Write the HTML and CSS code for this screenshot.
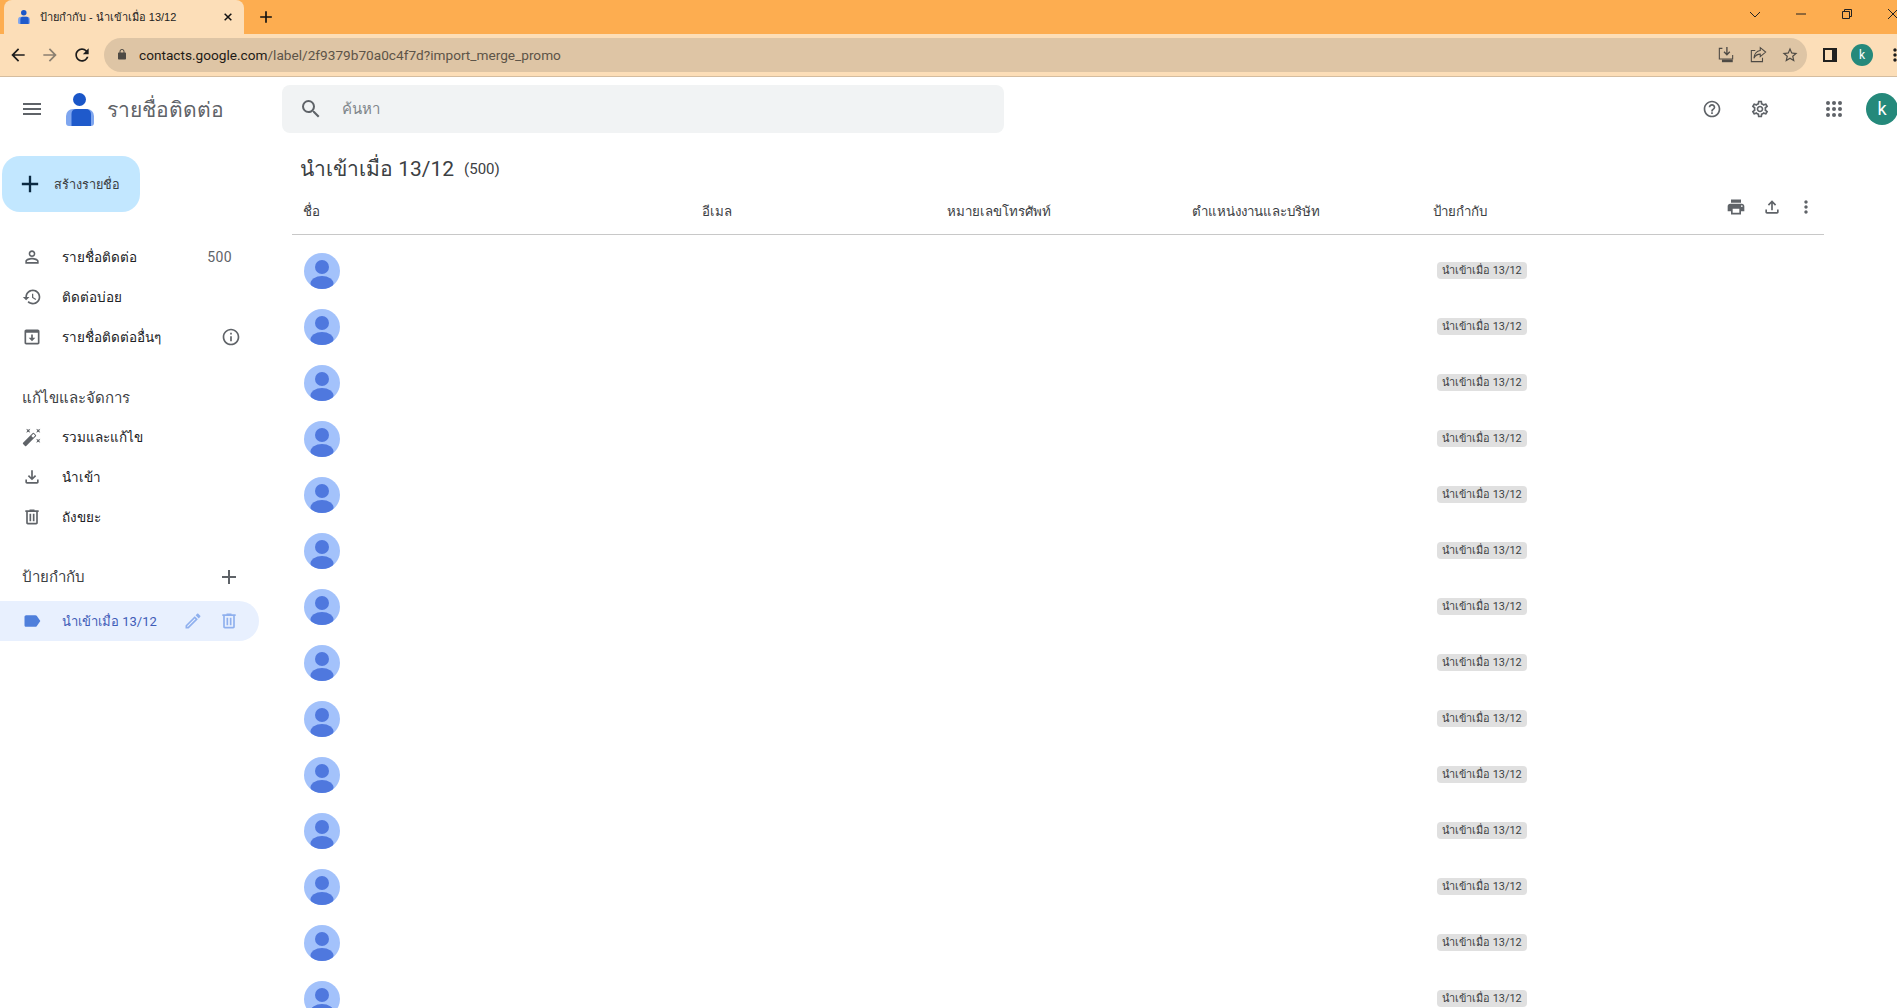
FILE: index.html
```html
<!DOCTYPE html>
<html lang="th">
<head>
<meta charset="utf-8">
<title>ป้ายกำกับ - นำเข้าเมื่อ 13/12</title>
<link rel="stylesheet" href="styles.css">
</head>
<body>
<svg class="sprite" xmlns="http://www.w3.org/2000/svg">
<symbol id="i-menu" viewBox="0 0 24 24"><path d="M3 18h18v-2H3v2zm0-5h18v-2H3v2zm0-7v2h18V6H3z"/></symbol>
<symbol id="i-search" viewBox="0 0 24 24"><path d="M15.5 14h-.79l-.28-.27A6.471 6.471 0 0 0 16 9.5 6.5 6.5 0 1 0 9.5 16c1.61 0 3.09-.59 4.23-1.57l.27.28v.79l5 4.99L20.49 19l-4.99-5zm-6 0C7.01 14 5 11.99 5 9.5S7.01 5 9.5 5 14 7.01 14 9.5 11.99 14 9.5 14z"/></symbol>
<symbol id="i-help" viewBox="0 0 24 24"><path d="M11 18h2v-2h-2v2zm1-16C6.48 2 2 6.48 2 12s4.48 10 10 10 10-4.48 10-10S17.52 2 12 2zm0 18c-4.41 0-8-3.59-8-8s3.59-8 8-8 8 3.59 8 8-3.59 8-8 8zm0-14c-2.21 0-4 1.79-4 4h2c0-1.1.9-2 2-2s2 .9 2 2c0 2-3 1.75-3 5h2c0-2.25 3-2.5 3-5 0-2.21-1.79-4-4-4z"/></symbol>
<symbol id="i-gear" viewBox="0 0 24 24"><path d="M19.43 12.98c.04-.32.07-.64.07-.98 0-.34-.03-.66-.07-.98l2.11-1.65c.19-.15.24-.42.12-.64l-2-3.46c-.09-.16-.26-.25-.44-.25-.06 0-.12.01-.17.03l-2.49 1c-.52-.4-1.08-.73-1.69-.98l-.38-2.65C14.46 2.18 14.25 2 14 2h-4c-.25 0-.46.18-.49.42l-.38 2.65c-.61.25-1.17.59-1.69.98l-2.49-1c-.06-.02-.12-.03-.18-.03-.17 0-.34.09-.43.25l-2 3.46c-.13.22-.07.49.12.64l2.11 1.65c-.04.32-.07.65-.07.98 0 .33.03.66.07.98l-2.11 1.65c-.19.15-.24.42-.12.64l2 3.46c.09.16.26.25.44.25.06 0 .12-.01.17-.03l2.49-1c.52.4 1.08.73 1.69.98l.38 2.65c.03.24.24.42.49.42h4c.25 0 .46-.18.49-.42l.38-2.65c.61-.25 1.17-.59 1.69-.98l2.49 1c.06.02.12.03.18.03.17 0 .34-.09.43-.25l2-3.46c.12-.22.07-.49-.12-.64l-2.11-1.65zm-1.98-1.71c.04.31.05.52.05.73 0 .21-.02.43-.05.73l-.14 1.13.89.7 1.08.84-.7 1.21-1.27-.51-1.04-.42-.9.68c-.43.32-.84.56-1.25.73l-1.06.43-.16 1.13-.2 1.35h-1.4l-.19-1.35-.16-1.13-1.06-.43c-.43-.18-.83-.41-1.23-.71l-.91-.7-1.06.43-1.27.51-.7-1.21 1.08-.84.89-.7-.14-1.13c-.03-.31-.05-.54-.05-.74s.02-.43.05-.73l.14-1.13-.89-.7-1.08-.84.7-1.21 1.27.51 1.04.42.9-.68c.43-.32.84-.56 1.25-.73l1.06-.43.16-1.13.2-1.35h1.39l.19 1.35.16 1.13 1.06.43c.43.18.83.41 1.23.71l.91.7 1.06-.43 1.27-.51.7 1.21-1.07.85-.89.7.14 1.13zM12 8c-2.21 0-4 1.79-4 4s1.79 4 4 4 4-1.79 4-4-1.79-4-4-4zm0 6c-1.1 0-2-.9-2-2s.9-2 2-2 2 .9 2 2-.9 2-2 2z"/></symbol>
<symbol id="i-apps" viewBox="0 0 24 24"><circle cx="6" cy="6" r="2"/><circle cx="12" cy="6" r="2"/><circle cx="18" cy="6" r="2"/><circle cx="6" cy="12" r="2"/><circle cx="12" cy="12" r="2"/><circle cx="18" cy="12" r="2"/><circle cx="6" cy="18" r="2"/><circle cx="12" cy="18" r="2"/><circle cx="18" cy="18" r="2"/></symbol>
<symbol id="i-person" viewBox="0 0 24 24"><path d="M12 5.9c1.16 0 2.1.94 2.1 2.1s-.94 2.1-2.1 2.1S9.9 9.16 9.9 8s.94-2.1 2.1-2.1m0 9c2.97 0 6.1 1.46 6.1 2.1v1.1H5.9V17c0-.64 3.13-2.1 6.1-2.1M12 4C9.79 4 8 5.79 8 8s1.79 4 4 4 4-1.79 4-4-1.79-4-4-4zm0 9c-2.67 0-8 1.34-8 4v3h16v-3c0-2.66-5.33-4-8-4z"/></symbol>
<symbol id="i-history" viewBox="0 0 24 24"><path d="M13 3c-4.97 0-9 4.03-9 9H1l3.89 3.89.07.14L9 12H6c0-3.87 3.13-7 7-7s7 3.13 7 7-3.13 7-7 7c-1.93 0-3.68-.79-4.94-2.06l-1.42 1.42C8.27 19.99 10.51 21 13 21c4.97 0 9-4.03 9-9s-4.03-9-9-9zm-1 5v5l4.28 2.54.72-1.21-3.5-2.08V8H12z"/></symbol>
<symbol id="i-other" viewBox="0 0 24 24"><path d="M19 3H5c-1.1 0-2 .9-2 2v14c0 1.1.9 2 2 2h14c1.1 0 2-.9 2-2V5c0-1.1-.9-2-2-2zm0 16H5V7h14v12zm-7-2l4-4h-3V9h-2v4H8l4 4z"/></symbol>
<symbol id="i-info" viewBox="0 0 24 24"><path d="M11 7h2v2h-2zm0 4h2v6h-2zm1-9C6.48 2 2 6.48 2 12s4.48 10 10 10 10-4.48 10-10S17.52 2 12 2zm0 18c-4.41 0-8-3.59-8-8s3.59-8 8-8 8 3.59 8 8-3.59 8-8 8z"/></symbol>
<symbol id="i-fix" viewBox="0 0 24 24"><path d="M7.5 5.6L10 7 8.6 4.5 10 2 7.5 3.4 5 2l1.4 2.5L5 7zm12 9.8L17 14l1.4 2.5L17 19l2.5-1.4L22 19l-1.4-2.5L22 14zM22 2l-2.5 1.4L17 2l1.4 2.5L17 7l2.5-1.4L22 7l-1.4-2.5zm-7.63 5.29a.996.996 0 0 0-1.41 0L1.29 18.96a.996.996 0 0 0 0 1.41l2.34 2.34c.39.39 1.02.39 1.41 0L16.7 11.05a.996.996 0 0 0 0-1.41l-2.33-2.35zm-1.03 5.49l-2.12-2.12 2.44-2.44 2.12 2.12-2.44 2.44z"/></symbol>
<symbol id="i-down" viewBox="0 0 24 24"><path d="M18 15v3H6v-3H4v3c0 1.1.9 2 2 2h12c1.1 0 2-.9 2-2v-3h-2zm-1-4l-1.41-1.41L13 12.17V4h-2v8.17L8.41 9.59 7 11l5 5 5-5z"/></symbol>
<symbol id="i-up" viewBox="0 0 24 24"><path d="M18 15v3H6v-3H4v3c0 1.1.9 2 2 2h12c1.1 0 2-.9 2-2v-3h-2zM7 9l1.41 1.41L11 7.83V16h2V7.83l2.59 2.58L17 9l-5-5-5 5z"/></symbol>
<symbol id="i-trash" viewBox="0 0 24 24"><path d="M15 4V3H9v1H4v2h1v13c0 1.1.9 2 2 2h10c1.1 0 2-.9 2-2V6h1V4h-5zm2 15H7V6h10v13zM9 8h2v9H9zm4 0h2v9h-2z"/></symbol>
<symbol id="i-pencil" viewBox="0 0 24 24"><path d="M14.06 9.02l.92.92L5.92 19H5v-.92l9.06-9.06M17.66 3c-.25 0-.51.1-.7.29l-1.83 1.83 3.75 3.75 1.83-1.83c.39-.39.39-1.02 0-1.41l-2.34-2.34c-.2-.2-.45-.29-.71-.29zm-3.6 3.19L3 17.25V21h3.75L17.81 9.94l-3.75-3.75z"/></symbol>
<symbol id="i-label" viewBox="0 0 24 24"><path d="M17.63 5.84C17.27 5.33 16.67 5 16 5L5 5.01C3.9 5.01 3 5.9 3 7v10c0 1.1.9 1.99 2 1.99L16 19c.67 0 1.27-.33 1.63-.84L22 12l-4.37-6.16z"/></symbol>
<symbol id="i-print" viewBox="0 0 24 24"><path d="M19 8H5c-1.66 0-3 1.34-3 3v6h4v4h12v-4h4v-6c0-1.66-1.34-3-3-3zm-3 11H8v-5h8v5zm3-7c-.55 0-1-.45-1-1s.45-1 1-1 1 .45 1 1-.45 1-1 1zm-1-9H6v4h12V3z"/></symbol>
<symbol id="i-more" viewBox="0 0 24 24"><path d="M12 8c1.1 0 2-.9 2-2s-.9-2-2-2-2 .9-2 2 .9 2 2 2zm0 2c-1.1 0-2 .9-2 2s.9 2 2 2 2-.9 2-2-.9-2-2-2zm0 6c-1.1 0-2 .9-2 2s.9 2 2 2 2-.9 2-2-.9-2-2-2z"/></symbol>
<symbol id="i-add" viewBox="0 0 24 24"><path d="M19 13h-6v6h-2v-6H5v-2h6V5h2v6h6v2z"/></symbol>
<symbol id="i-back" viewBox="0 0 24 24"><path d="M20 11H7.83l5.59-5.59L12 4l-8 8 8 8 1.41-1.41L7.83 13H20v-2z"/></symbol>
<symbol id="i-forward" viewBox="0 0 24 24"><path d="M12 4l-1.41 1.41L16.17 11H4v2h12.17l-5.58 5.59L12 20l8-8z"/></symbol>
<symbol id="i-reload" viewBox="0 0 24 24"><path d="M17.65 6.35C16.2 4.9 14.21 4 12 4c-4.42 0-7.99 3.58-7.99 8s3.57 8 7.99 8c3.73 0 6.84-2.55 7.73-6h-2.08c-.82 2.33-3.04 4-5.65 4-3.31 0-6-2.69-6-6s2.69-6 6-6c1.66 0 3.14.69 4.22 1.78L13 11h7V4l-2.35 2.35z"/></symbol>
<symbol id="i-lock" viewBox="0 0 24 24"><path d="M18 8h-1V6c0-2.76-2.24-5-5-5S7 3.24 7 6v2H6c-1.1 0-2 .9-2 2v10c0 1.1.9 2 2 2h12c1.1 0 2-.9 2-2V10c0-1.1-.9-2-2-2zM9 6c0-1.66 1.34-3 3-3s3 1.34 3 3v2H9V6z"/></symbol>
<symbol id="i-star" viewBox="0 0 24 24"><path d="M22 9.24l-7.19-.62L12 2 9.19 8.63 2 9.24l5.46 4.73L5.82 21 12 17.27 18.18 21l-1.63-7.03L22 9.24zM12 15.4l-3.76 2.27 1-4.28-3.32-2.88 4.38-.38L12 6.1l1.71 4.04 4.38.38-3.32 2.88 1 4.28L12 15.4z"/></symbol>
<symbol id="i-install" viewBox="0 0 20 20"><path fill="none" stroke="currentColor" stroke-width="1.2" d="M6 2.6H2.600v11.800h14.800V10"/><path d="M11 1v8M7.800 6.500L11 9.700l3.200-3.200" fill="none" stroke="currentColor" stroke-width="1.5"/><rect x="5.500" y="15" width="12" height="3"/></symbol>
<symbol id="i-share" viewBox="0 0 20 20"><path fill="none" stroke="currentColor" stroke-width="1.2" d="M7 5H2.600v12.400h12.400V13"/><path fill="none" stroke="currentColor" stroke-width="1.2" d="M12.500 1.800L18.500 6.800l-6 5V9C9.500 9 7 10.500 5.500 13.500 5.500 9 8.500 5.500 12.500 5z"/></symbol>
<symbol id="i-close" viewBox="0 0 12 12"><path d="M2 2l8 8M10 2l-8 8" fill="none" stroke="currentColor" stroke-width="1.8"/></symbol>
<symbol id="i-logo" viewBox="0 0 28 33"><circle cx="13.500" cy="6.500" r="6.500" fill="#1a56c8"/><path d="M7 16h14a7 7 0 0 1 7 7v7a3 3 0 0 1-3 3H3a3 3 0 0 1-3-3v-7a7 7 0 0 1 7-7z" fill="#7fa6ef"/><path d="M10 16h10a5 5 0 0 1 5 5v12H5.500V21a5 5 0 0 1 4.500-5z" fill="#1f5acb"/></symbol>
<symbol id="i-avatar" viewBox="0 0 36 36"><defs><clipPath id="av-clip"><circle cx="18" cy="18" r="18"/></clipPath></defs><circle cx="18" cy="18" r="18" fill="#a3c2fb"/><g clip-path="url(#av-clip)" fill="#4f78de"><circle cx="18" cy="14" r="7"/><ellipse cx="18" cy="30.500" rx="11.500" ry="7.500"/></g></symbol>
</svg>

<header class="tabstrip">
  <div class="tab">
    <svg class="fav"><use href="#i-logo"/></svg>
    <span class="tab-title">ป้ายกำกับ - นำเข้าเมื่อ 13/12</span>
    <svg class="tab-close"><use href="#i-close"/></svg>
  </div>
  <svg class="newtab"><use href="#i-add"/></svg>
  <div class="winctl">
    <svg class="win" viewBox="0 0 12 12"><path d="M1 4l5 5 5-5" fill="none" stroke="currentColor"/></svg>
    <svg class="win" viewBox="0 0 12 12"><path d="M1 6h10" fill="none" stroke="currentColor" stroke-width="1"/></svg>
    <svg class="win" viewBox="0 0 12 12"><path d="M1.500 3.500h7v7h-7zM3.500 3.500v-2h7v7h-2" fill="none" stroke="currentColor"/></svg>
    <svg class="win" viewBox="0 0 12 12"><path d="M1 1l10 10M11 1L1 11" fill="none" stroke="currentColor"/></svg>
  </div>
</header>

<nav class="toolbar">
  <svg class="tb-icon dark"><use href="#i-back"/></svg>
  <svg class="tb-icon faded"><use href="#i-forward"/></svg>
  <svg class="tb-icon dark"><use href="#i-reload"/></svg>
  <div class="omnibox">
    <svg class="lock"><use href="#i-lock"/></svg>
    <span class="url"><span class="url-host">contacts.google.com</span>/label/2f9379b70a0c4f7d?import_merge_promo</span>
    <svg class="omni-icon"><use href="#i-install"/></svg>
    <svg class="omni-icon"><use href="#i-share"/></svg>
    <svg class="omni-icon"><use href="#i-star"/></svg>
  </div>
  <div class="sidepanel"><span class="sidepanel-fill"></span></div>
  <span class="profile-small">k</span>
  <svg class="tb-icon chrome-menu"><use href="#i-more"/></svg>
</nav>

<div class="apphead">
  <svg class="hamburger"><use href="#i-menu"/></svg>
  <svg class="logo"><use href="#i-logo"/></svg>
  <span class="brand">รายชื่อติดต่อ</span>
  <div class="searchbar">
    <svg class="search-icon"><use href="#i-search"/></svg>
    <span class="search-text">ค้นหา</span>
  </div>
  <div class="head-right">
    <svg class="head-icon"><use href="#i-help"/></svg>
    <svg class="head-icon gear"><use href="#i-gear"/></svg>
    <svg class="apps"><use href="#i-apps"/></svg>
    <span class="profile">k</span>
  </div>
</div>

<div class="layout">
  <aside class="sidebar">
    <div class="create"><svg class="create-plus"><use href="#i-add"/></svg><span>สร้างรายชื่อ</span></div>
    <ul class="navlist first">
      <li class="navitem"><svg class="navicon"><use href="#i-person"/></svg><span class="navtext">รายชื่อติดต่อ</span><span class="navcount">500</span></li>
      <li class="navitem"><svg class="navicon"><use href="#i-history"/></svg><span class="navtext">ติดต่อบ่อย</span></li>
      <li class="navitem"><svg class="navicon"><use href="#i-other"/></svg><span class="navtext">รายชื่อติดต่ออื่นๆ</span><svg class="navinfo"><use href="#i-info"/></svg></li>
    </ul>
    <h2 class="navhead">แก้ไขและจัดการ</h2>
    <ul class="navlist">
      <li class="navitem"><svg class="navicon"><use href="#i-fix"/></svg><span class="navtext">รวมและแก้ไข</span></li>
      <li class="navitem"><svg class="navicon"><use href="#i-down"/></svg><span class="navtext">นำเข้า</span></li>
      <li class="navitem"><svg class="navicon"><use href="#i-trash"/></svg><span class="navtext">ถังขยะ</span></li>
    </ul>
    <div class="navhead labels"><span>ป้ายกำกับ</span><svg class="label-add"><use href="#i-add"/></svg></div>
    <div class="navitem selected">
      <svg class="navicon"><use href="#i-label"/></svg><span class="navtext">นำเข้าเมื่อ 13/12</span>
      <svg class="sel-icon pencil"><use href="#i-pencil"/></svg><svg class="sel-icon"><use href="#i-trash"/></svg>
    </div>
  </aside>

  <main class="main">
    <h1 class="title">นำเข้าเมื่อ 13/12<span class="count">(500)</span></h1>
    <div class="row thead">
      <span>ชื่อ</span><span>อีเมล</span><span>หมายเลขโทรศัพท์</span><span>ตำแหน่งงานและบริษัท</span><span>ป้ายกำกับ</span>
      <span class="actions"><svg class="act"><use href="#i-print"/></svg><svg class="act"><use href="#i-up"/></svg><svg class="act"><use href="#i-more"/></svg></span>
    </div>
    <div class="tbody">
      <div class="row contact"><svg class="avatar"><use href="#i-avatar"/></svg><span></span><span></span><span></span><span class="chip">นำเข้าเมื่อ 13/12</span></div>
      <div class="row contact"><svg class="avatar"><use href="#i-avatar"/></svg><span></span><span></span><span></span><span class="chip">นำเข้าเมื่อ 13/12</span></div>
      <div class="row contact"><svg class="avatar"><use href="#i-avatar"/></svg><span></span><span></span><span></span><span class="chip">นำเข้าเมื่อ 13/12</span></div>
      <div class="row contact"><svg class="avatar"><use href="#i-avatar"/></svg><span></span><span></span><span></span><span class="chip">นำเข้าเมื่อ 13/12</span></div>
      <div class="row contact"><svg class="avatar"><use href="#i-avatar"/></svg><span></span><span></span><span></span><span class="chip">นำเข้าเมื่อ 13/12</span></div>
      <div class="row contact"><svg class="avatar"><use href="#i-avatar"/></svg><span></span><span></span><span></span><span class="chip">นำเข้าเมื่อ 13/12</span></div>
      <div class="row contact"><svg class="avatar"><use href="#i-avatar"/></svg><span></span><span></span><span></span><span class="chip">นำเข้าเมื่อ 13/12</span></div>
      <div class="row contact"><svg class="avatar"><use href="#i-avatar"/></svg><span></span><span></span><span></span><span class="chip">นำเข้าเมื่อ 13/12</span></div>
      <div class="row contact"><svg class="avatar"><use href="#i-avatar"/></svg><span></span><span></span><span></span><span class="chip">นำเข้าเมื่อ 13/12</span></div>
      <div class="row contact"><svg class="avatar"><use href="#i-avatar"/></svg><span></span><span></span><span></span><span class="chip">นำเข้าเมื่อ 13/12</span></div>
      <div class="row contact"><svg class="avatar"><use href="#i-avatar"/></svg><span></span><span></span><span></span><span class="chip">นำเข้าเมื่อ 13/12</span></div>
      <div class="row contact"><svg class="avatar"><use href="#i-avatar"/></svg><span></span><span></span><span></span><span class="chip">นำเข้าเมื่อ 13/12</span></div>
      <div class="row contact"><svg class="avatar"><use href="#i-avatar"/></svg><span></span><span></span><span></span><span class="chip">นำเข้าเมื่อ 13/12</span></div>
      <div class="row contact"><svg class="avatar"><use href="#i-avatar"/></svg><span></span><span></span><span></span><span class="chip">นำเข้าเมื่อ 13/12</span></div>
    </div>
  </main>
</div>
</body>
</html>
```

FILE: styles.css
```css
* { box-sizing: border-box; }
html, body { margin: 0; height: 100%; overflow: hidden; background: #fff; }
body {
  display: flex;
  flex-direction: column;
  height: 1008px;
  font-family: Roboto, "Noto Sans", "Liberation Sans", "DejaVu Sans", sans-serif;
  color: #3c4043;
}
ul { list-style: none; margin: 0; padding: 0; }
svg { display: block; flex: none; fill: currentColor; }
.sprite { position: absolute; width: 0; height: 0; }

/* browser chrome */
.tabstrip { flex: none; height: 34px; display: flex; align-items: stretch; background: #fdad50; padding-left: 4px; color: #111; }
.tab { width: 240px; display: flex; align-items: center; padding-left: 14px; background: #fcdeb8; border-radius: 8px 8px 0 0; }
.fav { width: 12px; height: 14px; margin-right: 10px; }
.tab-title { width: 183px; font: 11px/16px "Liberation Sans", "Noto Sans", sans-serif; white-space: nowrap; overflow: hidden; color: #222; }
.tab-close { width: 10px; height: 10px; }
.newtab { width: 20px; height: 20px; margin: 7px 0 0 12px; color: #111; }
.winctl { margin-left: auto; display: flex; align-items: center; padding-bottom: 6px; }
.win { width: 12px; height: 12px; margin-right: 34px; color: #222; }
.win:last-child { margin-right: -2px; }
.toolbar { flex: none; height: 43px; display: flex; align-items: center; background: #fcdeb8; border-bottom: 1px solid #d5bd9f; padding: 0 0 1px 8px; }
.tb-icon { width: 20px; height: 20px; margin-right: 12px; }
.dark { color: #1c1c1c; }
.faded { color: #8a7f70; }
.omnibox { flex: none; width: 1703px; height: 34px; border-radius: 17px; background: #dec5a5; display: flex; align-items: center; padding-left: 12px; color: #4e4a44; }
.lock { width: 12px; height: 13px; margin-right: 11px; color: #4e4a44; }
.url { flex: 1; font: 13.65px/18px Roboto, "Liberation Sans", sans-serif; color: #5d5448; white-space: nowrap; }
.url-host { color: #1f1b16; }
.omni-icon { width: 18px; height: 18px; margin-right: 14px; }
.omni-icon:last-child { margin-right: 8px; }
.sidepanel { flex: none; width: 14px; height: 14px; margin-left: 16px; background: #20201f; padding: 2px 5px 2px 2px; }
.sidepanel-fill { display: block; width: 7px; height: 10px; background: #fcdeb8; }
.profile-small { flex: none; width: 22px; height: 22px; margin-left: 14px; border-radius: 50%; background: #25897b; color: #fff; font: 12px/22px Roboto, sans-serif; text-align: center; }
.chrome-menu { margin: 0 0 0 12px; color: #1c1c1c; }

/* app header */
.apphead { flex: none; height: 64px; display: flex; align-items: center; }
.hamburger { width: 24px; height: 24px; margin-left: 20px; color: #5f6368; }
.logo { width: 28px; height: 33px; margin-left: 22px; }
.brand { width: 175px; margin: 2px 0 0 13px; font-size: 21px; line-height: 28px; color: #5f6368; white-space: nowrap; }
.searchbar { width: 722px; height: 48px; display: flex; align-items: center; background: #f1f3f4; border-radius: 8px; padding-left: 17px; }
.search-icon { width: 24px; height: 24px; color: #5f6368; }
.search-text { margin-left: 19px; font-size: 15px; color: #80868b; }
.head-right { margin-left: auto; display: flex; align-items: center; }
.head-icon { width: 20px; height: 20px; color: #5f6368; }
.gear { margin-left: 28px; }
.apps { width: 24px; height: 24px; margin-left: 52px; color: #5f6368; }
.profile { width: 32px; height: 32px; margin: 0 -1px 0 20px; border-radius: 50%; background: #25897b; color: #fff; font-size: 18px; line-height: 32px; text-align: center; }

/* sidebar */
.layout { flex: 1; display: flex; min-height: 0; }
.sidebar { flex: none; width: 292px; padding-top: 15px; }
.create { width: 138px; height: 56px; margin-left: 2px; display: flex; align-items: center; background: #c2e7ff; border-radius: 18px; padding-left: 14px; font-size: 12.7px; color: #3c4043; }
.create-plus { width: 28px; height: 28px; margin-right: 10px; color: #0b2a42; }
.navlist.first { margin-top: 25px; }
.navitem { height: 40px; display: flex; align-items: center; padding-left: 22px; font-size: 13.5px; color: #202124; }
.navicon { width: 20px; height: 20px; color: #5f6368; }
.navtext { margin-left: 20px; white-space: nowrap; }
.navcount { margin-left: auto; margin-right: 60px; color: #5f6368; letter-spacing: .4px; font-size: 14px; }
.navinfo { width: 20px; height: 20px; margin-left: auto; margin-right: 51px; color: #5f6368; }
.navhead { margin: 30px 0 8px 22px; font-size: 15px; line-height: 22px; font-weight: 400; color: #3c4043; }
.labels { display: flex; align-items: center; margin: 28px 0 12px 22px; }
.label-add { width: 24px; height: 24px; margin-left: auto; margin-right: 51px; color: #5f6368; }
.selected { width: 259px; background: #e8f0fe; border-radius: 0 20px 20px 0; color: #3f5cb8; font-size: 13px; }
.selected .navicon { color: #4f7fdb; }
.sel-icon { width: 20px; height: 20px; margin-left: 16px; color: #8fb0ee; }
.pencil { margin-left: auto; }
.selected .sel-icon:last-child { margin-right: 20px; }

/* main */
.main { flex: 1; min-width: 0; padding-right: 73px; }
.title { margin: 0; padding: 14px 0 0 8px; height: 47px; font-size: 21px; line-height: 28px; font-weight: 400; color: #3c4043; }
.count { margin-left: 10px; font-size: 15px; vertical-align: 2px; }
.row { display: grid; grid-template-columns: 399px 245px 245px 241px 191px 200px; align-items: center; padding-left: 11px; }
.thead { height: 47px; border-bottom: 1px solid #c8c8c8; font-size: 13.3px; color: #3c4043; }
.actions { display: flex; justify-content: flex-end; margin-top: -8px; padding-right: 8px; }
.act { width: 20px; height: 20px; margin-left: 16px; color: #5f6368; }
.act:last-child { margin-left: 14px; }
.tbody { padding-top: 8px; }
.contact { height: 56px; }
.avatar { width: 36px; height: 36px; margin-left: 1px; }
.chip { justify-self: start; margin: -1px 0 0 4px; height: 17px; padding: 0 5px; background: #e0e0e0; border-radius: 4px; font-size: 10.9px; line-height: 17px; color: #3c4043; white-space: nowrap; }
```
